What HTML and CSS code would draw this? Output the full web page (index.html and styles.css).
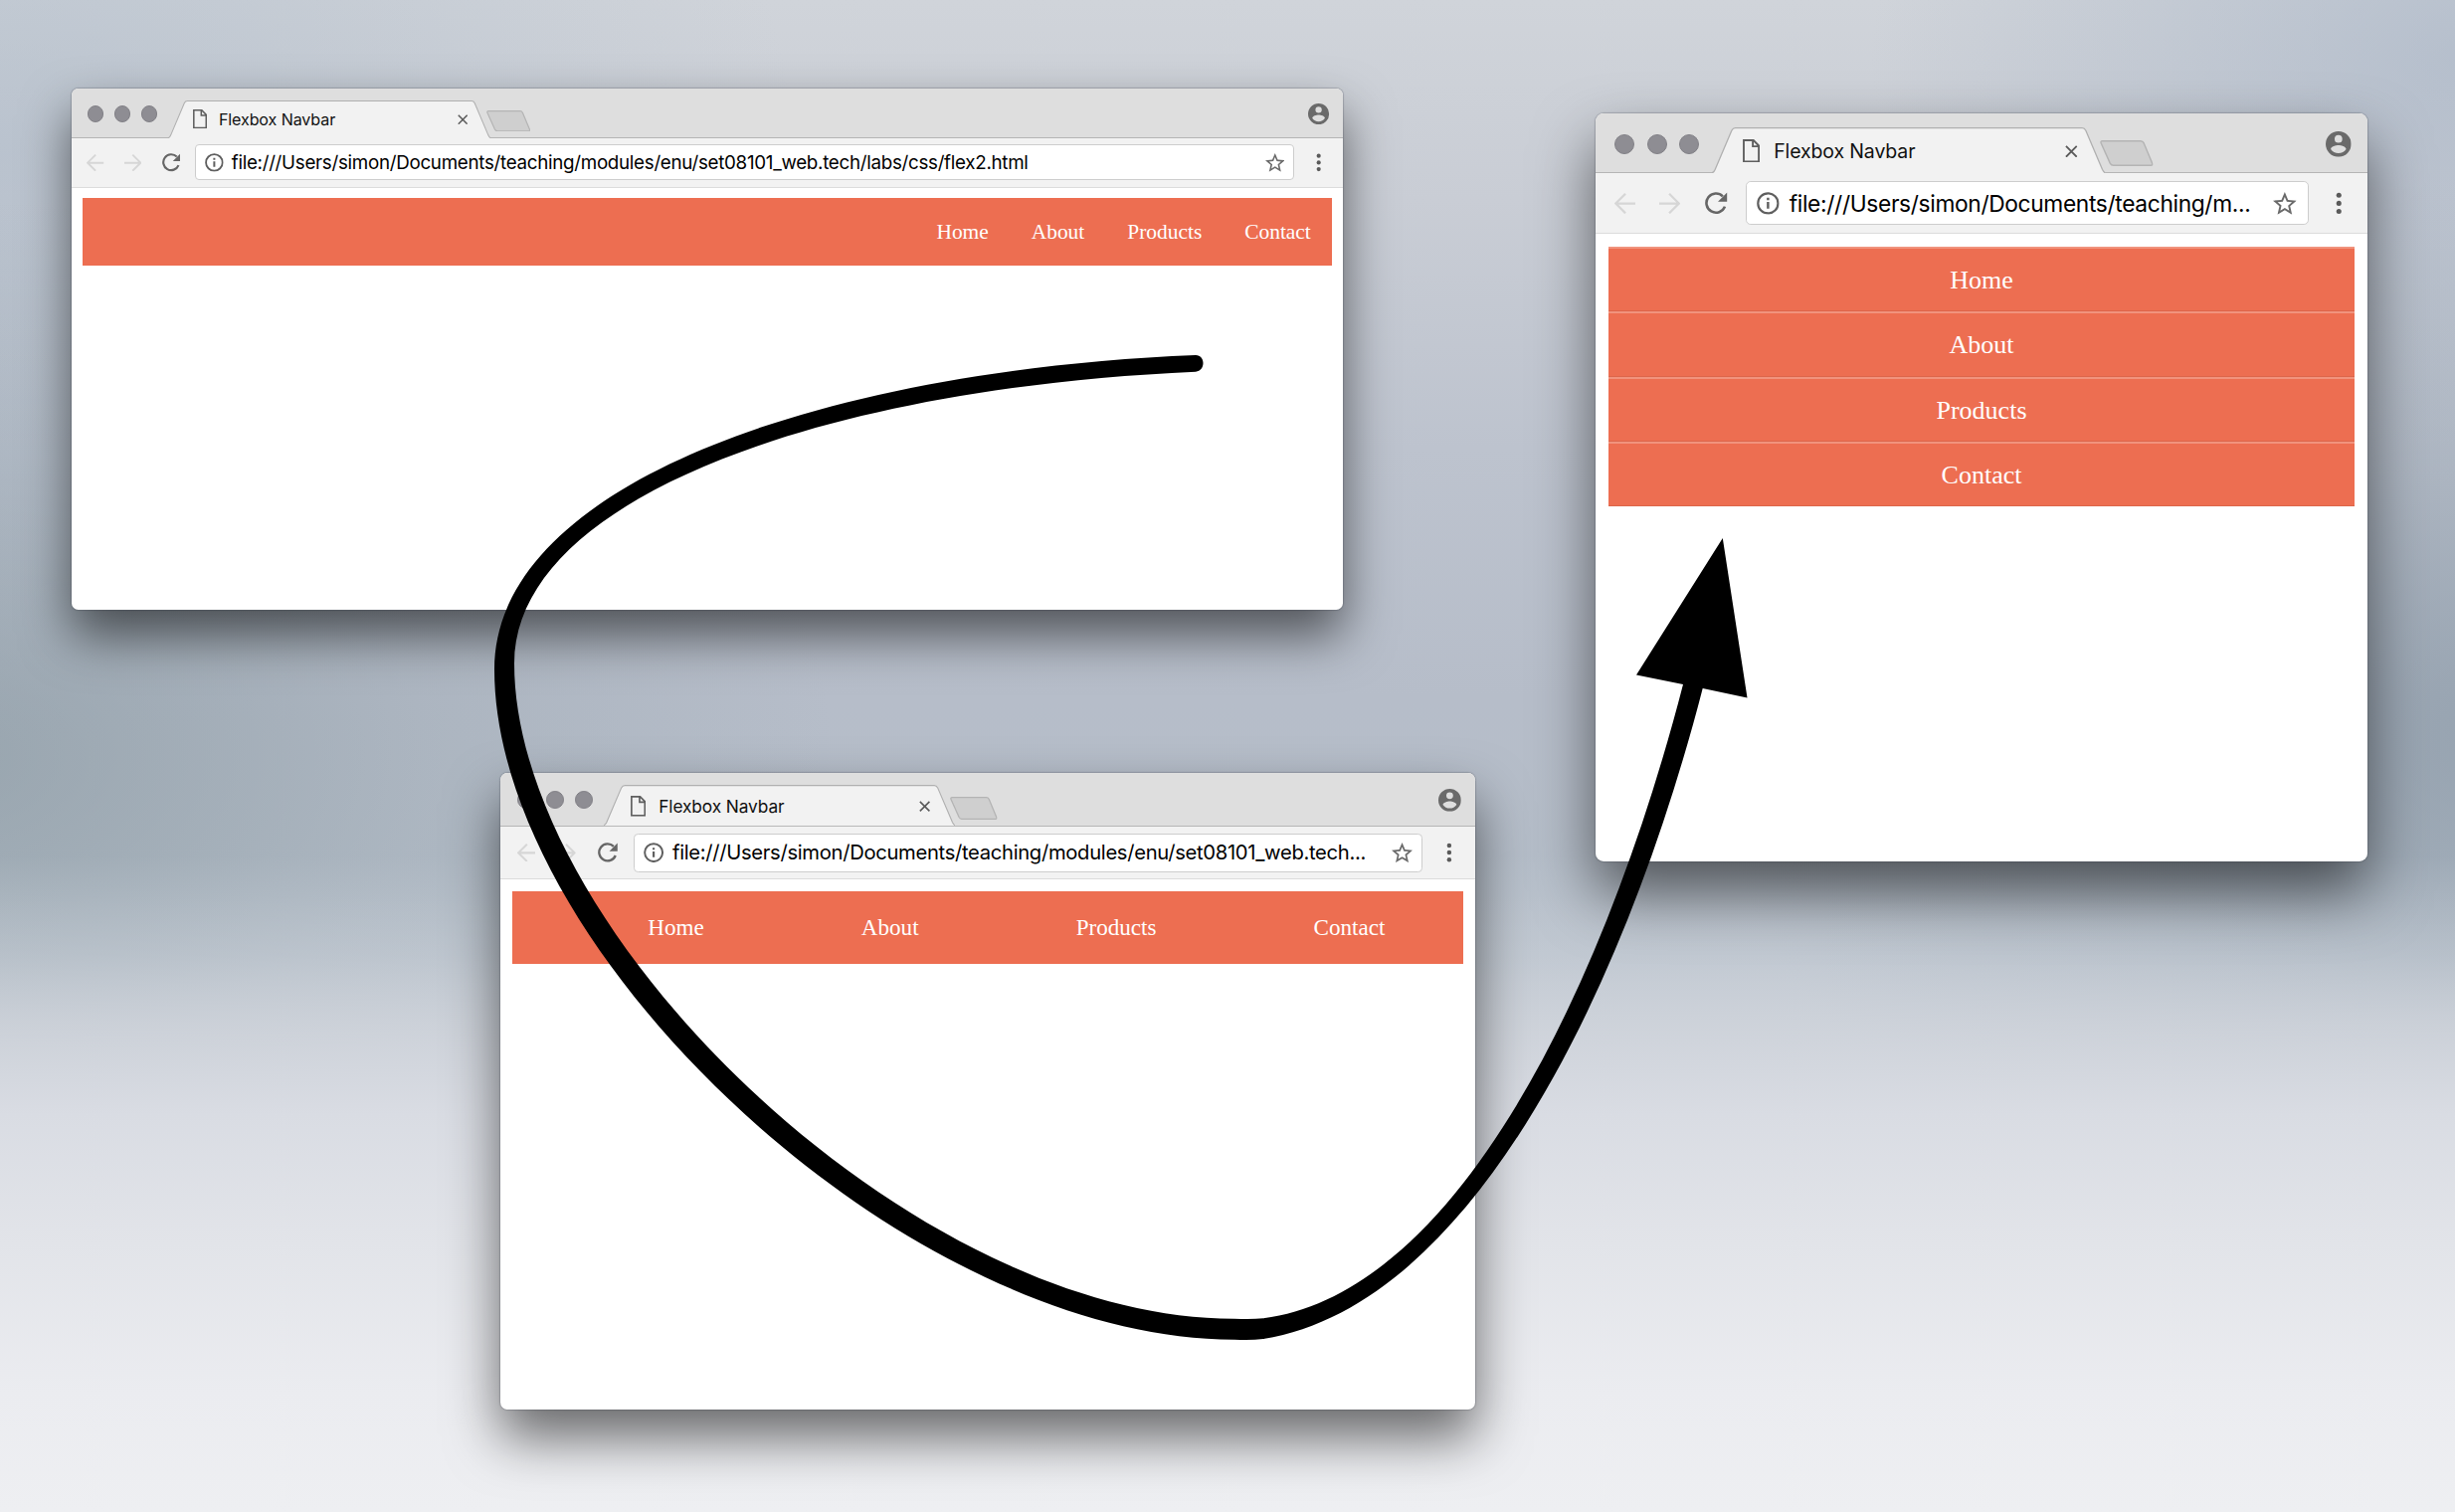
FILE: index.html
```html
<!DOCTYPE html>
<html lang="en">
<head>
<meta charset="utf-8">
<title>Flexbox Navbar</title>
<link rel="stylesheet" href="styles.css">
</head>
<body>
<svg class="defs" aria-hidden="true">
  <symbol id="tab" viewBox="0 0 243.4 28.6" preserveAspectRatio="none">
    <path d="M0 28.1C1.200 28 1.600 26.800 2 26L12.200 2C12.800.8 13.300.4 14.500.4H229C230.200.4 230.700.8 231.300 2L241.500 26C241.900 26.800 242.300 28 243.400 28.100V28.600H0Z" fill="#f2f2f2"/>
    <path d="M0 28.1C1.200 28 1.600 26.800 2 26L12.200 2C12.800.8 13.300.4 14.500.4H229C230.200.4 230.700.8 231.300 2L241.500 26C241.900 26.800 242.300 28 243.400 28.100" fill="none" stroke="#b0b0b0" stroke-width=".8"/>
  </symbol>
  <symbol id="newtab" viewBox="0 0 33 16">
    <path d="M1.500.5H25.200Q26.600.5 27.200 1.800L32.300 14Q32.900 15.500 31.500 15.500H8.400Q7 15.500 6.300 14.200L.7 1.700Q.3.5 1.500.5Z" fill="#cfcfcf" stroke="#b4b4b4" stroke-width=".9"/>
  </symbol>
  <symbol id="page" viewBox="0 0 10.500 14.400">
    <path d="M.6.6H6.600L9.900 4V13.800H.6ZM6.200.6V4.400H9.900" fill="none" stroke="#5f5f5f" stroke-width="1.150"/>
  </symbol>
  <symbol id="close" viewBox="0 0 8 8"><path d="M.6.6 7.400 7.400M7.400.6.6 7.400" stroke="#5a5a5a" stroke-width="1.150"/></symbol>
  <symbol id="user" viewBox="0 0 20 20">
    <path fill="#6a6a6a" fill-rule="evenodd" d="M10 0a10 10 0 1 0 0 20a10 10 0 1 0 0-20ZM10 3a3 3 0 1 1 0 6a3 3 0 1 1 0-6ZM10 17.200c-2.500 0-4.700-1.300-6-3.200c0-2 4-3.100 6-3.100s6 1.100 6 3.100c-1.300 1.900-3.500 3.200-6 3.200Z"/>
  </symbol>
  <symbol id="back" viewBox="0 0 13 13"><path d="M13 6.500H1M6.800.5.8 6.500 6.800 12.500" fill="none" stroke="#d6d6d6" stroke-width="1.400"/></symbol>
  <symbol id="forward" viewBox="0 0 13 13"><path d="M0 6.500H12M6.200.5 12.200 6.500 6.200 12.500" fill="none" stroke="#d6d6d6" stroke-width="1.400"/></symbol>
  <symbol id="reload" viewBox="0 0 14 14">
    <path d="M12.300 9A5.900 5.900 0 1 1 11 2.700" fill="none" stroke="#666" stroke-width="1.600"/>
    <path d="M13.700.3V6H8Z" fill="#666"/>
  </symbol>
  <symbol id="info" viewBox="0 0 14 14">
    <circle cx="7" cy="7" r="6.200" fill="none" stroke="#5f5f5f" stroke-width="1.350"/>
    <path d="M7 6.200V10.300M7 3.600V5" stroke="#5f5f5f" stroke-width="1.500"/>
  </symbol>
  <symbol id="star" viewBox="2 2 20 19">
    <path fill="#6a6a6a" d="M22 9.240l-7.190-.62L12 2 9.190 8.630 2 9.240l5.460 4.730L5.820 21 12 17.270 18.180 21l-1.630-7.030L22 9.240zM12 15.400l-3.760 2.270 1-4.280-3.320-2.880 4.380-.38L12 6.100l1.710 4.040 4.380.38-3.320 2.880 1 4.280L12 15.400z"/>
  </symbol>
  <symbol id="menu" viewBox="0 0 4 14"><g fill="#5a5a5a"><circle cx="2" cy="2" r="1.550"/><circle cx="2" cy="7" r="1.550"/><circle cx="2" cy="12" r="1.550"/></g></symbol>
</svg>

<main class="desktop">
  <section class="window window-wide">
    <header class="tabstrip">
      <div class="lights"><i></i><i></i><i></i></div>
      <div class="tab">
        <svg class="tab-shape"><use href="#tab"/></svg>
        <svg class="i-page"><use href="#page"/></svg>
        <span class="tab-title">Flexbox Navbar</span>
        <svg class="i-close"><use href="#close"/></svg>
      </div>
      <svg class="i-newtab"><use href="#newtab"/></svg>
      <svg class="i-user"><use href="#user"/></svg>
    </header>
    <div class="toolbar">
      <svg class="i-arrow"><use href="#back"/></svg>
      <svg class="i-arrow"><use href="#forward"/></svg>
      <svg class="i-reload"><use href="#reload"/></svg>
      <div class="omnibox">
        <svg class="i-info"><use href="#info"/></svg>
        <span class="url">file:///Users/simon/Documents/teaching/modules/enu/set08101_web.tech/labs/css/flex2.html</span>
        <svg class="i-star"><use href="#star"/></svg>
      </div>
      <svg class="i-menu"><use href="#menu"/></svg>
    </div>
    <nav class="navbar navbar-end"><a>Home</a><a>About</a><a>Products</a><a>Contact</a></nav>
  </section>

  <section class="window window-narrow">
    <header class="tabstrip">
      <div class="lights"><i></i><i></i><i></i></div>
      <div class="tab">
        <svg class="tab-shape"><use href="#tab"/></svg>
        <svg class="i-page"><use href="#page"/></svg>
        <span class="tab-title">Flexbox Navbar</span>
        <svg class="i-close"><use href="#close"/></svg>
      </div>
      <svg class="i-newtab"><use href="#newtab"/></svg>
      <svg class="i-user"><use href="#user"/></svg>
    </header>
    <div class="toolbar">
      <svg class="i-arrow"><use href="#back"/></svg>
      <svg class="i-arrow"><use href="#forward"/></svg>
      <svg class="i-reload"><use href="#reload"/></svg>
      <div class="omnibox">
        <svg class="i-info"><use href="#info"/></svg>
        <span class="url">file:///Users/simon/Documents/teaching/m...</span>
        <svg class="i-star"><use href="#star"/></svg>
      </div>
      <svg class="i-menu"><use href="#menu"/></svg>
    </div>
    <nav class="navbar navbar-stack"><a>Home</a><a>About</a><a>Products</a><a>Contact</a></nav>
  </section>

  <section class="window window-medium">
    <header class="tabstrip">
      <div class="lights"><i></i><i></i><i></i></div>
      <div class="tab">
        <svg class="tab-shape"><use href="#tab"/></svg>
        <svg class="i-page"><use href="#page"/></svg>
        <span class="tab-title">Flexbox Navbar</span>
        <svg class="i-close"><use href="#close"/></svg>
      </div>
      <svg class="i-newtab"><use href="#newtab"/></svg>
      <svg class="i-user"><use href="#user"/></svg>
    </header>
    <div class="toolbar">
      <svg class="i-arrow"><use href="#back"/></svg>
      <svg class="i-arrow"><use href="#forward"/></svg>
      <svg class="i-reload"><use href="#reload"/></svg>
      <div class="omnibox">
        <svg class="i-info"><use href="#info"/></svg>
        <span class="url">file:///Users/simon/Documents/teaching/modules/enu/set08101_web.tech...</span>
        <svg class="i-star"><use href="#star"/></svg>
      </div>
      <svg class="i-menu"><use href="#menu"/></svg>
    </div>
    <nav class="navbar navbar-around"><a>Home</a><a>About</a><a>Products</a><a>Contact</a></nav>
  </section>

  <svg class="flow-arrow" viewBox="0 0 2468 1520">
    <path d="M1202 357C830 372 497 485 497 673C497 958 911 1347 1241 1346.700Q1258 1347.500 1270 1346C1483 1312 1636 985 1711.700 692L1756.500 701.500 1731.800 541 1645 678.500 1692 688C1617 978 1470 1299 1270 1325.300Q1258 1326.500 1241 1325.700C916 1326 517 937 517 667C517 500 830 390 1202 373.700C1212 373 1212 357 1202 357Z"/>
  </svg>
</main>
</body>
</html>
```
FILE: styles.css
```css
body {
  margin: 0;
  overflow: hidden;
}

.defs {
  position: absolute;
  width: 0;
  height: 0;
}

.desktop {
  position: relative;
  width: 2468px;
  height: 1520px;
  overflow: hidden;
  background:
    linear-gradient(rgba(200, 207, 215, 0) 860px, rgba(203, 209, 217, .45) 960px, rgba(210, 214, 221, .8) 1030px, #d9dce3 1120px, #e2e4e9 1250px, #ebecf0 1400px, #eeeff2 1520px),
    radial-gradient(ellipse 900px 560px at -60px 760px, rgba(134, 150, 158, .62), rgba(134, 150, 158, .2) 55%, rgba(134, 150, 158, 0)),
    radial-gradient(ellipse 800px 560px at 2520px 740px, rgba(130, 146, 160, .62), rgba(130, 146, 160, .22) 55%, rgba(130, 146, 160, 0)),
    radial-gradient(ellipse 600px 420px at 2480px 60px, rgba(165, 178, 196, .6), rgba(165, 178, 196, 0)),
    radial-gradient(ellipse 800px 600px at 0 150px, rgba(165, 180, 196, .45), rgba(165, 180, 196, 0)),
    linear-gradient(#d0d4da 0, #c9cdd5 200px, #bdc3ce 450px, #b6bdc9 700px, #b5bec9 900px, #bcc4ce 1000px);
}

/* Every window is laid out in multiples of its own --u unit. */
.window {
  position: absolute;
  box-sizing: border-box;
  overflow: hidden;
  background: #fff;
  border-radius: calc(var(--u) * 5);
  box-shadow: 0 0 1px 1px rgba(60, 65, 75, .25), 0 calc(var(--u) * 19) calc(var(--u) * 37) rgba(0, 0, 0, .56);
}

.window-wide {
  --u: 1.341px;
  --tab: 241.9;
  left: 72px;
  top: 89px;
  width: 1278px;
  height: 524px;
}

.window-narrow {
  --u: 1.625px;
  --tab: 243.4;
  left: 1604px;
  top: 114px;
  width: 776px;
  height: 752px;
}

.window-medium {
  --u: 1.444px;
  --tab: 244.6;
  left: 503px;
  top: 777px;
  width: 980px;
  height: 640px;
}

.window svg {
  display: block;
  flex: none;
}

.tabstrip {
  display: flex;
  box-sizing: border-box;
  height: calc(var(--u) * 37.2);
  padding-right: calc(var(--u) * 10);
  border-bottom: 1px solid #b5b5b5;
  background: #dedede;
}

.lights {
  display: flex;
  gap: calc(var(--u) * 7.7);
  width: calc(var(--u) * 60.1);
  padding: calc(var(--u) * 12.8) 0 0 calc(var(--u) * 11.9);
}

.lights i {
  box-sizing: border-box;
  width: calc(var(--u) * 12.3);
  height: calc(var(--u) * 12.3);
  border: 1px solid #828187;
  border-radius: 50%;
  background: #8e8d93;
}

.tab {
  position: relative;
  display: flex;
  box-sizing: border-box;
  width: calc(var(--u) * var(--tab));
  height: calc(var(--u) * 28.6);
  margin-top: calc(var(--u) * 8.6);
  padding: 0 calc(var(--u) * 17) 0 calc(var(--u) * 18.8);
}

.tab-shape {
  position: absolute;
  left: 0;
  top: 0;
  width: 100%;
  height: 100%;
}

.i-page {
  position: relative;
  width: calc(var(--u) * 10.5);
  height: calc(var(--u) * 14.4);
  margin-top: calc(var(--u) * 7.3);
}

.tab-title {
  position: relative;
  flex: 1;
  margin: calc(var(--u) * 7.2) 0 0 calc(var(--u) * 9);
  font: calc(var(--u) * 12)/calc(var(--u) * 15) Inter, sans-serif;
  letter-spacing: calc(var(--u) * -.08);
  color: #111;
  white-space: nowrap;
}

.i-close {
  position: relative;
  width: calc(var(--u) * 7.8);
  height: calc(var(--u) * 7.8);
  margin-top: calc(var(--u) * 10.8);
}

.i-newtab {
  width: calc(var(--u) * 33);
  height: calc(var(--u) * 16);
  margin: calc(var(--u) * 16.4) auto 0 calc(var(--u) * -3.3);
}

.i-user {
  width: calc(var(--u) * 15.8);
  height: calc(var(--u) * 15.8);
  margin-top: calc(var(--u) * 11.3);
}

.toolbar {
  display: flex;
  align-items: center;
  box-sizing: border-box;
  height: calc(var(--u) * 37.2);
  padding: 0 calc(var(--u) * 16) 0 calc(var(--u) * 11.5);
  border-bottom: 1px solid #dcdcdc;
  background: #f2f2f2;
}

.i-arrow {
  width: calc(var(--u) * 13);
  height: calc(var(--u) * 13);
  margin-right: calc(var(--u) * 15.1);
}

.i-reload {
  width: calc(var(--u) * 14);
  height: calc(var(--u) * 14);
  margin-right: calc(var(--u) * 11);
}

.omnibox {
  display: flex;
  flex: 1;
  align-items: center;
  box-sizing: border-box;
  min-width: 0;
  height: calc(var(--u) * 27);
  margin-right: calc(var(--u) * 16.6);
  padding: 0 calc(var(--u) * 6.5);
  border: 1px solid #cdcdcd;
  border-radius: calc(var(--u) * 3);
  background: #fff;
}

.i-info {
  width: calc(var(--u) * 14);
  height: calc(var(--u) * 14);
}

.url {
  flex: 1;
  min-width: 0;
  margin-left: calc(var(--u) * 6);
  padding-top: calc(var(--u) * .5);
  font: calc(var(--u) * 14)/calc(var(--u) * 18) Inter, sans-serif;
  letter-spacing: calc(var(--u) * -.215);
  color: #000;
  white-space: nowrap;
}

.i-star {
  width: calc(var(--u) * 14.6);
  height: calc(var(--u) * 14);
}

.i-menu {
  width: calc(var(--u) * 4);
  height: calc(var(--u) * 14);
}

.navbar {
  display: flex;
  margin: calc(var(--u) * 8) calc(var(--u) * 8) 0;
  background: #ed6e51;
  color: #fff;
  font: calc(var(--u) * 16)/calc(var(--u) * 18.2) "Liberation Serif", serif;
}

.navbar a {
  padding: calc(var(--u) * 16);
}

.navbar-end {
  justify-content: flex-end;
}

.navbar-around {
  justify-content: space-around;
  padding-left: calc(var(--u) * 40);
}

.navbar-around a {
  padding-bottom: calc(var(--u) * 16.4);
}

.navbar-stack {
  flex-direction: column;
  text-align: center;
}

.navbar-stack a {
  box-sizing: border-box;
  height: calc(var(--u) * 40.2);
  padding: calc(var(--u) * 10.6) 0 0;
  border-top: 2px solid #f1937d;
  border-bottom: 1px solid #dc664b;
}

.flow-arrow {
  position: absolute;
  left: 0;
  top: 0;
  width: 2468px;
  height: 1520px;
}
```
